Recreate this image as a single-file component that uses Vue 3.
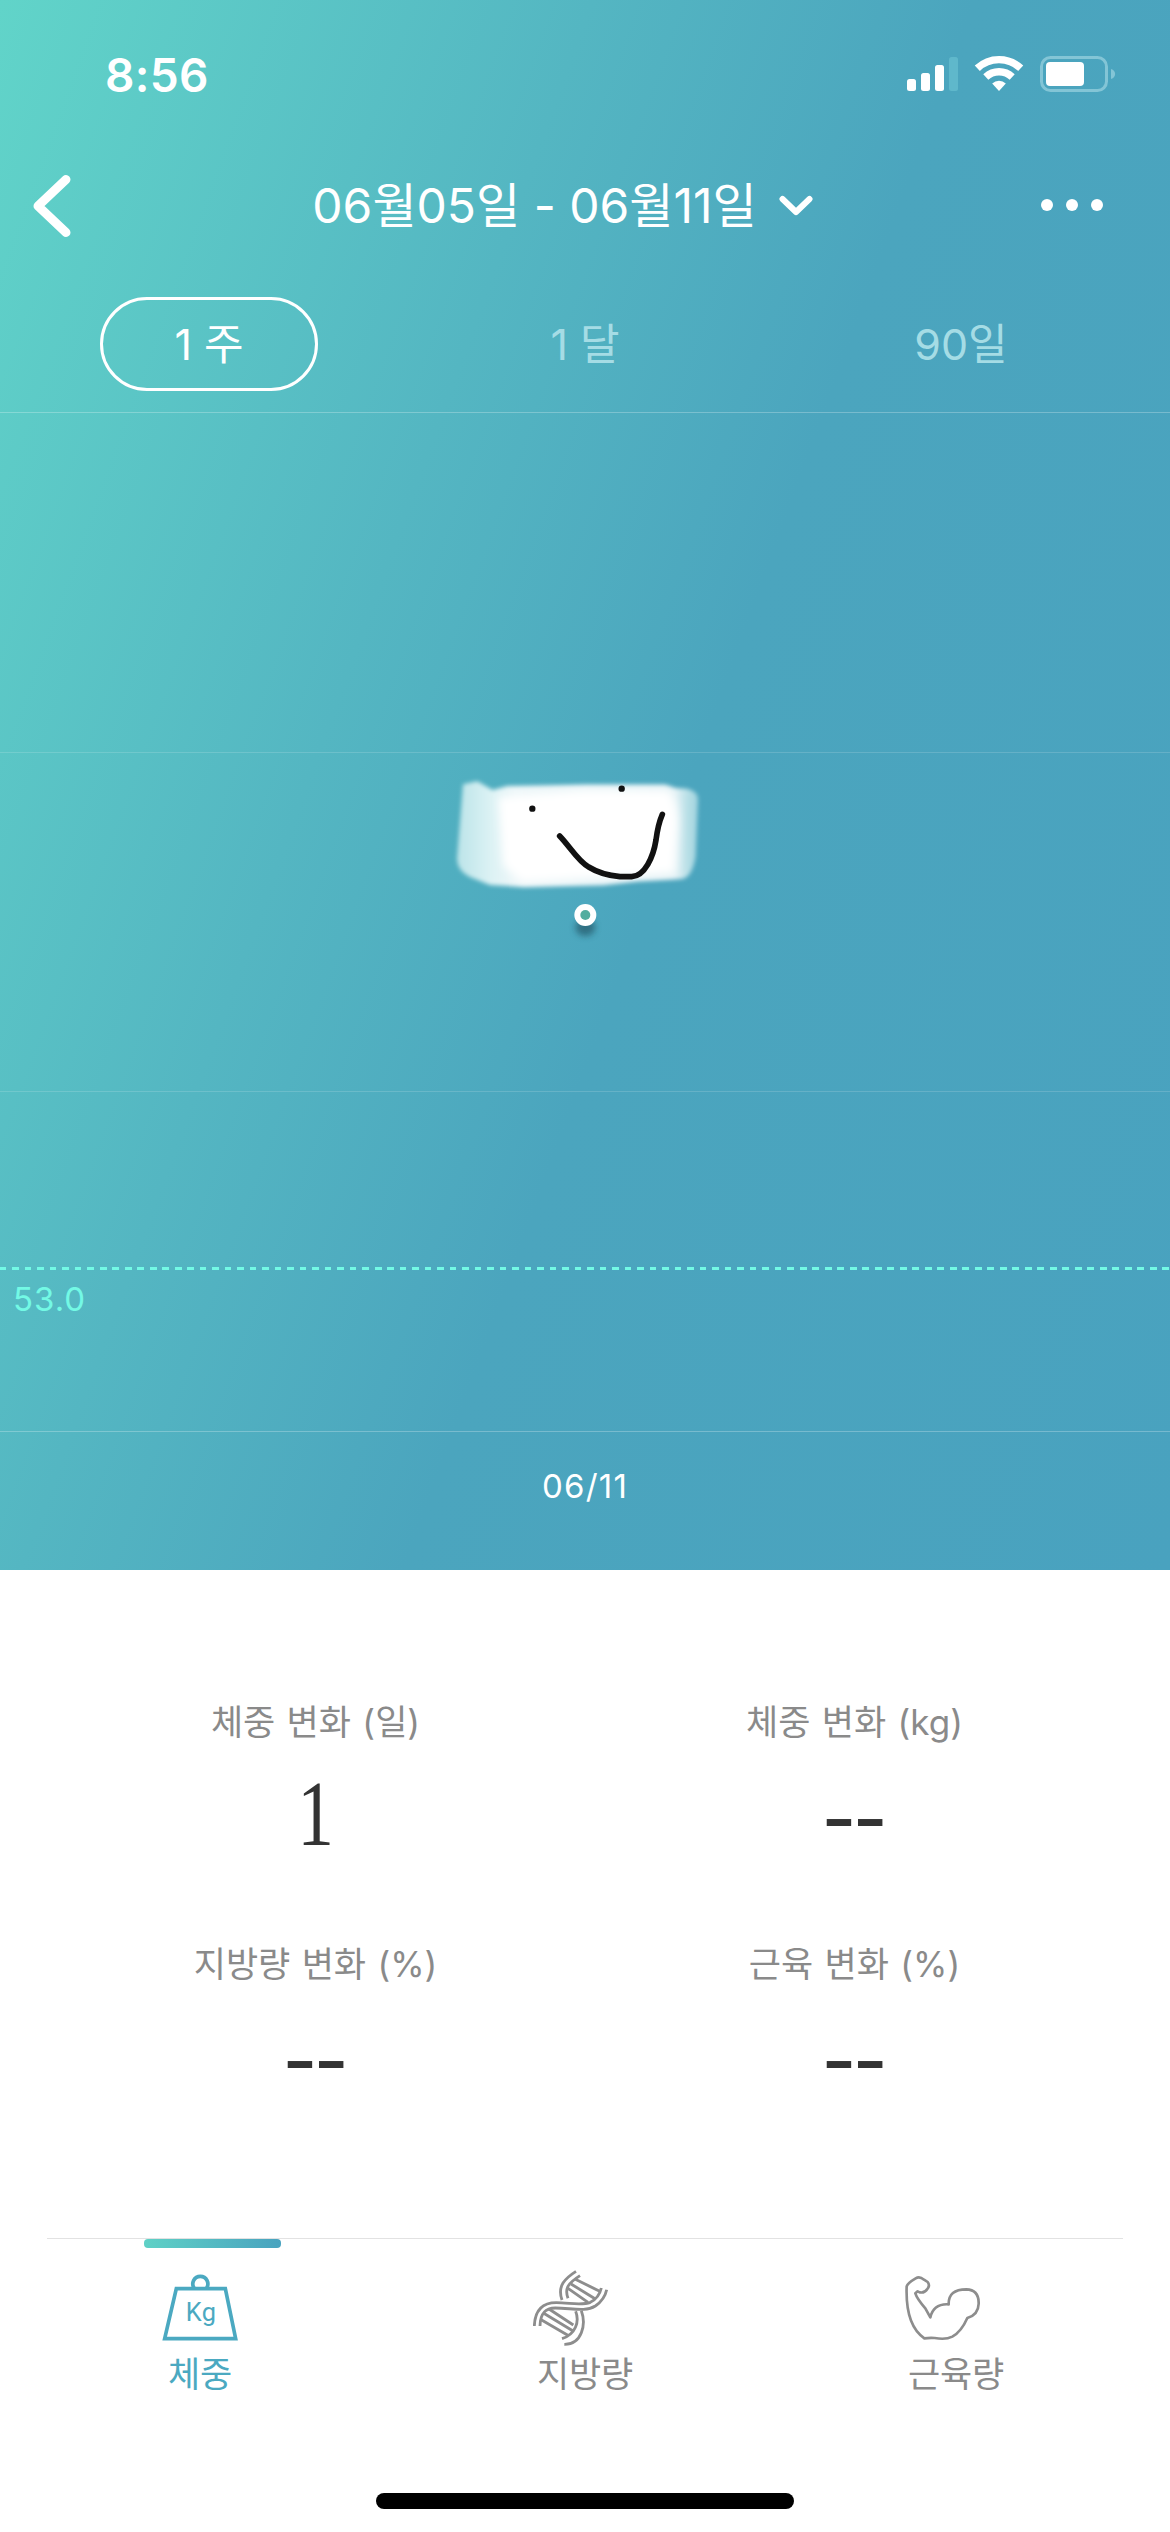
<script setup>
import { ref } from 'vue'

const ranges = ['1 주', '1 달', '90일']
const activeRange = ref(0)
const stats = [
  { label: '체중 변화 (일)', value: '1' },
  { label: '체중 변화 (kg)', value: '--' },
  { label: '지방량 변화 (%)', value: '--' },
  { label: '근육 변화 (%)', value: '--' },
]
</script>

<template>
  <main class="screen">
    <section class="hero">
      <div class="status">
        <span class="clock">8:56</span>
        <svg class="status-icons" width="210" height="40" viewBox="906 54 210 40" fill="#fff">
          <rect x="907" y="79" width="9" height="12" rx="2.5" />
          <rect x="921" y="73" width="9" height="18" rx="2.5" />
          <rect x="935" y="65" width="9" height="26" rx="2.5" />
          <rect x="949" y="57" width="9" height="34" rx="2.5" fill="#5fb8cb" />
          <g fill="none" stroke="#fff" stroke-width="7.4">
            <path d="M977.3 68.3a31.5 31.5 0 0 1 43.4 0" />
            <path d="M985.8 77a19.3 19.3 0 0 1 26.4 0" />
          </g>
          <path d="M999 91l-6.8-7.6a10.3 10.3 0 0 1 13.6 0z" />
          <rect x="1041.5" y="57.5" width="65" height="33" rx="9" fill="none" stroke="#83c5d6" stroke-width="3" />
          <rect x="1046" y="62" width="38" height="24" rx="4" />
          <path d="M1111 69c5.500 1.500 5.500 8.500 0 10z" fill="#83c5d6" />
        </svg>
      </div>

      <header class="nav">
        <svg class="back" width="40" height="66" viewBox="0 0 40 66"><path d="M35 6.500L7 33L35 59.500" /></svg>
        <div class="period">
          <span class="period-text">06월05일 - 06월11일</span>
          <svg class="caret" width="34" height="22" viewBox="0 0 34 22"><path d="M3.500 4L17 17L30.500 4" /></svg>
        </div>
        <svg class="more" width="64" height="14" viewBox="0 0 64 14" fill="#fff">
          <circle cx="7" cy="6" r="6" /><circle cx="32" cy="6" r="6" /><circle cx="57" cy="6" r="6" />
        </svg>
      </header>

      <div class="ranges">
        <div v-for="(r, i) in ranges" :key="r" class="range-cell">
          <button class="range" :class="{ active: i === activeRange }" @click="activeRange = i">{{ r }}</button>
        </div>
      </div>

      <div class="chart">
        <i class="grid-line strong"></i>
        <i class="grid-line"></i>
        <i class="grid-line"></i>
        <i class="grid-line strong"></i>
        <svg class="point" width="300" height="200" viewBox="0 0 900 600">
          <defs>
            <filter id="soft" x="-10%" y="-20%" width="120%" height="140%"><feGaussianBlur stdDeviation="7" /></filter>
            <filter id="softer" x="-10%" y="-20%" width="120%" height="140%"><feGaussianBlur stdDeviation="13" /></filter>
            <filter id="shade" x="-50%" y="-50%" width="200%" height="200%"><feGaussianBlur stdDeviation="9" /></filter>
            <linearGradient id="brush" x1="78" x2="808" y1="0" y2="0" gradientUnits="userSpaceOnUse">
              <stop offset="0" stop-color="#f2fffd" stop-opacity=".66" />
              <stop offset=".14" stop-color="#f6fffe" stop-opacity=".84" />
              <stop offset=".24" stop-color="#fff" stop-opacity=".9" />
              <stop offset=".9" stop-color="#fff" stop-opacity=".85" />
              <stop offset=".96" stop-color="#f2fffd" stop-opacity=".62" />
              <stop offset="1" stop-color="#f2fffd" stop-opacity=".5" />
            </linearGradient>
          </defs>
          <path filter="url(#soft)" fill="url(#brush)" d="M99 103L142 94L188 120L232 108L470 104L705 104L735 114L772 116Q804 124 804 148L797 320Q786 382 756 387L625 394L520 406L280 411L180 405L118 380Q80 360 81 325L90 215Z" />
          <path filter="url(#softer)" fill="#fff" d="M205 142L460 120L715 120Q742 150 744 220L734 370L560 380L275 396L220 345Z" />
          <g fill="#111">
            <circle cx="307" cy="176" r="9.500" /><circle cx="575" cy="116" r="9.500" />
          </g>
          <path fill="none" stroke="#111" stroke-width="17" stroke-linecap="round" d="M389 258C420 290 445 335 476 351Q515 375 570 380L605 380C645 378 670 320 678 270Q684 223 697 193" />
          <ellipse cx="466" cy="532" rx="30" ry="26" fill="#1d4c5c" opacity=".6" filter="url(#shade)" />
          <circle cx="466" cy="495" r="33" fill="#fff" />
          <circle cx="466" cy="495" r="15" fill="#52ad9f" />
        </svg>
        <div class="goal"><span>53.0</span></div>
      </div>
      <div class="axis">06/11</div>
    </section>

    <section class="stats">
      <div v-for="s in stats" :key="s.label" class="stat">
        <div class="stat-label">{{ s.label }}</div>
        <div class="stat-value" :class="{ numeric: s.value !== '--' }">{{ s.value }}</div>
      </div>
    </section>

    <nav class="tabs">
      <div class="tab selected">
        <svg width="76" height="76" viewBox="0 0 228 228" fill="none" stroke="#4ba9c1" stroke-width="11">
          <path d="M43 56H190L221 206H8Z" />
          <path d="M96 54C87 40 96 19 115 19S143 40 134 54" />
          <text x="117" y="154" text-anchor="middle" fill="#4ba9c1" stroke="none">Kg</text>
        </svg>
        <span>체중</span>
      </div>
      <div class="tab">
        <svg width="76" height="76" viewBox="0 0 228 228" fill="none" stroke="#8d8d8d" stroke-width="8.500">
          <path d="M129 4C96 25 72 48 87 90M141 17C105 40 94 55 105 85" />
          <path d="M4 168C6 115 35 98 70 98C110 98 145 108 172 97Q198 84 205 54M21 168C22 128 38 114 67 114C115 114 157 127 187 108Q215 88 221 59" />
          <path d="M128 124C140 155 128 193 87 206M145 122C160 163 147 224 94 223" />
          <path d="M127 28L203 65M114 42L186 86M105 55L165 97" />
          <path d="M48 117L121 165M31 129L119 182M22 148L107 197" />
        </svg>
        <span>지방량</span>
      </div>
      <div class="tab">
        <svg width="76" height="76" viewBox="0 0 228 228" fill="none" stroke="#8d8d8d" stroke-width="8" stroke-linejoin="round">
          <path d="M61 205C24 180 5 132 8 49Q11 39 35 25Q47 18 60 29L71 36Q79 46 70 57Q62 70 47 67L41 64L34 70Q39 86 64 115L79 142Q89 100 134 103Q133 58 187 58Q225 59 224 101Q223 134 190 144Q172 185 145 200Q125 210 92 204Q76 203 61 205Z" />
        </svg>
        <span>근육량</span>
      </div>
    </nav>
    <div class="home"></div>
  </main>
</template>

<style>
body { margin: 0; background: #fff; }
</style>

<style scoped>
.screen {
  width: 1170px;
  height: 2532px;
  display: flex;
  flex-direction: column;
  overflow: hidden;
  background: #fff;
  font-family: Inter, "Noto Sans CJK KR", sans-serif;
}
svg { display: block; flex: none; }
.hero {
  height: 1570px;
  flex: none;
  color: #fff;
  background: linear-gradient(110deg, #61d4c9 0%, #54b6c2 34%, #4ba5be 56%, #49a2bf 100%);
}
.status {
  height: 148px;
  box-sizing: border-box;
  padding: 54px 54px 0 105px;
  display: flex;
  justify-content: space-between;
  align-items: flex-start;
}
.clock { font-size: 46px; line-height: 42px; font-weight: 600; letter-spacing: .3px; }
.nav {
  height: 116px;
  display: flex;
  align-items: center;
  justify-content: space-between;
  padding: 0 66px 0 31px;
}
.back path, .caret path { fill: none; stroke: #fff; stroke-width: 9; stroke-linecap: round; stroke-linejoin: round; }
.caret path { stroke-width: 6; }
.period { display: flex; align-items: center; gap: 22px; margin-left: 14px; }
.period-text { font-size: 48px; line-height: 60px; white-space: nowrap; }
.ranges { height: 148px; box-sizing: border-box; padding: 33px 21px 0; display: flex; }
.range-cell { flex: 1; display: flex; justify-content: center; }
.range {
  width: 218px;
  height: 94px;
  box-sizing: border-box;
  border: 3px solid transparent;
  border-radius: 47px;
  padding: 0;
  background: none;
  font: 400 43px/88px Inter, "Noto Sans CJK KR", sans-serif;
  color: #a5dce5;
}
.range.active { border-color: #fff; color: #fff; }
.chart {
  height: 1020px;
  position: relative;
  display: flex;
  flex-direction: column;
  justify-content: space-between;
}
.grid-line { display: block; height: 1px; background: rgba(255, 255, 255, .15); }
.grid-line.strong { background: rgba(255, 255, 255, .25); }
.point { position: absolute; left: 430px; top: 338px; }
.goal {
  position: absolute;
  left: 0;
  right: 0;
  top: 855px;
  color: #73f9e5;
  font-size: 33px;
  line-height: 40px;
  letter-spacing: 1px;
}
.goal::before {
  content: "";
  display: block;
  height: 3px;
  margin-bottom: 9px;
  background: repeating-linear-gradient(90deg, #73f9e5 0 6.500px, transparent 6.500px 12.500px);
}
.goal span { display: block; padding-left: 13px; }
.axis { padding-top: 34px; text-align: center; font-size: 33px; line-height: 40px; letter-spacing: 1.2px; }
.stats {
  height: 668px;
  flex: none;
  box-sizing: border-box;
  padding: 129px 46px 0 46px;
  display: grid;
  grid-template-columns: 1fr 1fr;
  grid-auto-rows: 242px;
}
.stat { text-align: center; }
.stat-label { font-size: 35px; line-height: 46px; color: #8a8a8a; word-spacing: 1.500px; }
.stat-value { font-family: "Liberation Serif", serif; font-size: 94px; line-height: 106px; margin-top: 15px; color: #333; }
.stat-value.numeric { transform: scaleX(.78); }
.tabs {
  height: 212px;
  flex: none;
  margin: 0 47px;
  border-top: 1px solid #e2e2e2;
  display: flex;
  position: relative;
}
.tabs::before {
  content: "";
  position: absolute;
  left: 97px;
  top: 0;
  width: 137px;
  height: 9px;
  border-radius: 4px;
  background: linear-gradient(90deg, #5fd1c6, #49a3bf);
}
.tab { width: 94px; margin-left: 277px; padding-top: 31px; color: #8a8a8a; font-size: 35px; line-height: 46px; white-space: nowrap; letter-spacing: -.2px; }
.tab:first-child { margin-left: 115px; }
.tab span { display: block; padding-left: 4px; margin-top: 5px; }
.tab.selected { color: #4ba9c1; }
.tab.selected span { padding-left: 6px; }
.tab text { font: 400 76px Roboto, sans-serif; letter-spacing: 1px; }
.home { width: 418px; height: 16px; margin: 42px auto 0; border-radius: 8px; background: #000; }
</style>
